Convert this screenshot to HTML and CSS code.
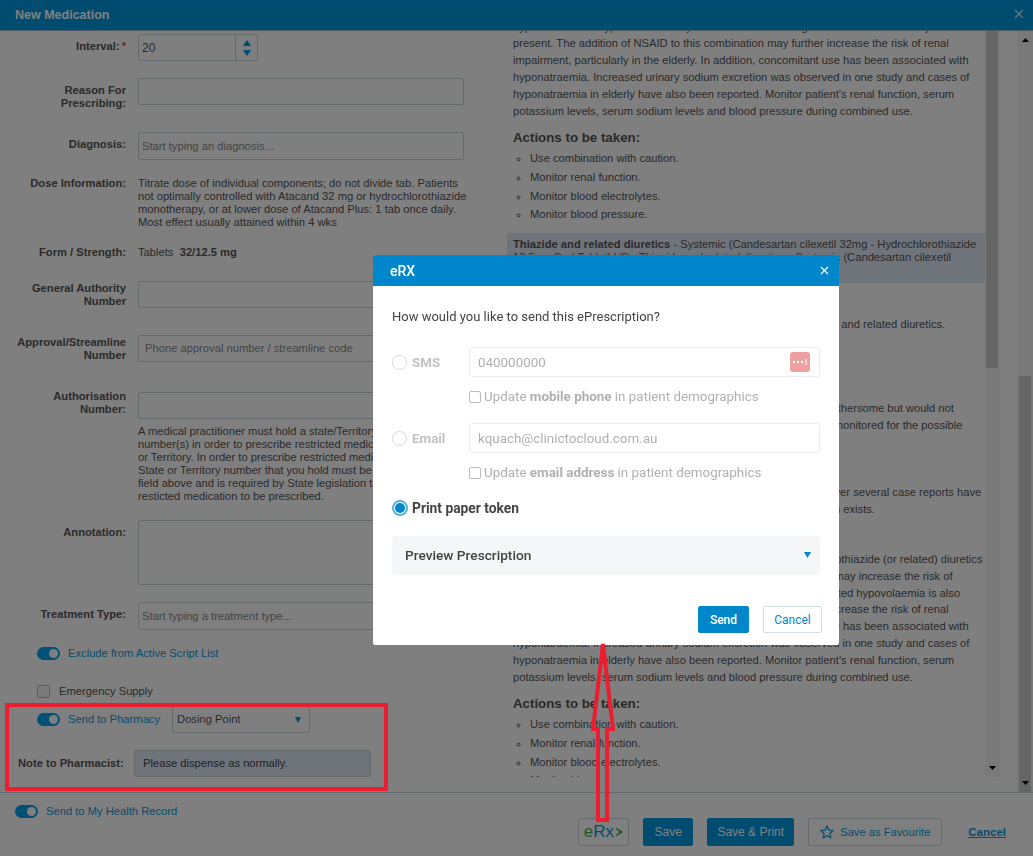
FILE: index.html
```html
<!DOCTYPE html>
<html lang="en">
<head>
<meta charset="utf-8">
<title>New Medication</title>
<link rel="stylesheet" href="styles.css">
</head>
<body>
<div class="app">
  <header class="titlebar">
    <span class="titlebar-title">New Medication</span>
    <svg class="titlebar-close" width="10" height="10" viewBox="0 0 10 10"><path d="M1 1l8 8M9 1l-8 8"/></svg>
  </header>

  <main class="workspace">
    <section class="form-pane">
      <div class="row row-interval">
        <label class="row-label">Interval:<span class="req">*</span></label>
        <div class="spin">
          <span class="spin-value">20</span>
          <span class="spin-buttons">
            <svg width="8" height="6" viewBox="0 0 8 6"><path d="M4 0l4 6H0z"/></svg>
            <svg width="8" height="6" viewBox="0 0 8 6"><path d="M0 0h8L4 6z"/></svg>
          </span>
        </div>
      </div>
      <div class="row row-reason">
        <label class="row-label">Reason For<br>Prescribing:</label>
        <div class="input"></div>
      </div>
      <div class="row row-diagnosis">
        <label class="row-label">Diagnosis:</label>
        <div class="input input-tall placeholder">Start typing an diagnosis...</div>
      </div>
      <div class="row row-dose">
        <label class="row-label">Dose Information:</label>
        <p class="row-text">Titrate dose of individual components; do not divide tab. Patients<br>not optimally controlled with Atacand 32 mg or hydrochlorothiazide<br>monotherapy, or at lower dose of Atacand Plus: 1 tab once daily.<br>Most effect usually attained within 4 wks</p>
      </div>
      <div class="row row-form">
        <label class="row-label">Form / Strength:</label>
        <p class="row-text">Tablets&nbsp; <b>32/12.5 mg</b></p>
      </div>
      <div class="row row-authority">
        <label class="row-label">General Authority<br>Number</label>
        <div class="input"></div>
      </div>
      <div class="row row-approval">
        <label class="row-label">Approval/Streamline<br>Number</label>
        <div class="input placeholder placeholder-inset">Phone approval number / streamline code</div>
      </div>
      <div class="row row-authorisation">
        <label class="row-label">Authorisation<br>Number:</label>
        <div class="stack">
          <div class="input"></div>
          <p class="row-text row-note">A medical practitioner must hold a state/Territory authority<br>number(s) in order to prescribe restricted medication in their State<br>or Territory. In order to prescribe restricted medication the<br>State or Territory number that you hold must be entered in the<br>field above and is required by State legislation to allow the<br>resticted medication to be prescribed.</p>
        </div>
      </div>
      <div class="row row-annotation">
        <label class="row-label">Annotation:</label>
        <div class="input textarea"></div>
      </div>
      <div class="row row-treatment">
        <label class="row-label">Treatment Type:</label>
        <div class="input input-tall placeholder">Start typing a treatment type...</div>
      </div>
      <div class="option option-exclude">
        <span class="toggle"></span><span class="option-link">Exclude from Active Script List</span>
      </div>
      <div class="option option-emergency">
        <span class="check"></span><span class="option-plain">Emergency Supply</span>
      </div>
      <div class="option option-pharmacy">
        <span class="toggle"></span><span class="option-link">Send to Pharmacy</span>
        <div class="select"><span>Dosing Point</span><svg width="6" height="6" viewBox="0 0 6 6"><path d="M0 0h6L3 6z"/></svg></div>
      </div>
      <div class="pharmacist">
        <label class="pharmacist-label">Note to Pharmacist:</label>
        <div class="pharmacist-input">Please dispense as normally.</div>
      </div>
    </section>

    <section class="info-pane">
      <div class="info-scroll">
        <div class="info-content">
          <p class="para para-first">hypotension and hypovolaemia may occur when these drugs are combined and may be<br>present. The addition of NSAID to this combination may further increase the risk of renal<br>impairment, particularly in the elderly. In addition, concomitant use has been associated with<br>hyponatraemia. Increased urinary sodium excretion was observed in one study and cases of<br>hyponatraemia in elderly have also been reported. Monitor patient's renal function, serum<br>potassium levels, serum sodium levels and blood pressure during combined use.</p>
          <h3 class="actions-title">Actions to be taken:</h3>
          <ul class="actions">
            <li>Use combination with caution.</li>
            <li>Monitor renal function.</li>
            <li>Monitor blood electrolytes.</li>
            <li>Monitor blood pressure.</li>
          </ul>
          <div class="interaction"><b>Thiazide and related diuretics</b> - Systemic (Candesartan cilexetil 32mg - Hydrochlorothiazide<br>12.5mg Oral Tablet) VS - Thiazide and related diuretics - Systemic (Candesartan cilexetil<br>32mg - Hydrochlorothiazide 12.5mg Oral Tablet)</div>
          <p class="para para-a">This medication contains two or more agents of the same thiazide and related diuretics.</p>
          <p class="para para-b">Concurrent use may be required in some patients and is rarely bothersome but would not<br>usually be recommended. These patients should be very closely monitored for the possible</p>
          <p class="para para-c">No formal interaction studies have been conducted in man, however several case reports have<br>been published and the potential for a highly significant interaction exists.</p>
          <p class="para para-d">Concurrent use of candesartan and other sartans with hydrochlorothiazide (or related) diuretics<br>is common in the treatment of hypertension, but the combination may increase the risk of<br>hypotension and acute renal impairment, especially if diuretic-related hypovolaemia is also<br>present. The addition of NSAID to this combination may further increase the risk of renal<br>impairment, particularly in the elderly. In addition, concomitant use has been associated with<br>hyponatraemia. Increased urinary sodium excretion was observed in one study and cases of<br>hyponatraemia in elderly have also been reported. Monitor patient's renal function, serum<br>potassium levels, serum sodium levels and blood pressure during combined use.</p>
          <h3 class="actions-title">Actions to be taken:</h3>
          <ul class="actions">
            <li>Use combination with caution.</li>
            <li>Monitor renal function.</li>
            <li>Monitor blood electrolytes.</li>
            <li>Monitor blood pressure.</li>
          </ul>
        </div>
        <div class="scrollbar scrollbar-inner">
          <span class="thumb thumb-inner"></span>
          <svg class="scroll-down" width="7" height="4" viewBox="0 0 7 4"><path d="M0 0h7L3.5 4z"/></svg>
        </div>
      </div>
      <div class="scrollbar scrollbar-outer">
        <svg class="scroll-up" width="7" height="4" viewBox="0 0 7 4"><path d="M3.5 0L7 4H0z"/></svg>
        <span class="thumb thumb-outer"></span>
        <svg class="scroll-down" width="7" height="4" viewBox="0 0 7 4"><path d="M0 0h7L3.5 4z"/></svg>
      </div>
    </section>
  </main>

  <footer class="footer">
    <div class="option option-record">
      <span class="toggle"></span><span class="option-link">Send to My Health Record</span>
    </div>
    <div class="footer-actions">
      <button class="btn btn-erx"><span class="erx-e">e</span><span class="erx-rx">Rx</span><svg width="9" height="10" viewBox="0 0 9 10"><path d="M1.500 1.500L6 5l-4.500 3.500" /><path d="M4.500 3.500L6.500 5l-2 1.500"/></svg></button>
      <button class="btn btn-primary btn-save">Save</button>
      <button class="btn btn-primary btn-print">Save &amp; Print</button>
      <button class="btn btn-favourite"><svg width="14" height="14" viewBox="0 0 14 14"><path d="M7 1.200l1.800 3.900 4.200.5-3.100 2.900.8 4.200L7 10.700l-3.700 2 .8-4.200L1 5.600l4.200-.5z"/></svg>Save as Favourite</button>
      <a class="footer-cancel" href="#">Cancel</a>
    </div>
  </footer>
</div>

<div class="backdrop"></div>

<div class="modal">
  <div class="modal-head">
    <span>eRX</span>
    <svg width="9" height="9" viewBox="0 0 9 9"><path d="M1 1l7 7M8 1L1 8"/></svg>
  </div>
  <div class="modal-body">
    <p class="question">How would you like to send this ePrescription?</p>
    <div class="send-row send-sms">
      <span class="radio"></span><span class="send-label">SMS</span>
      <div class="send-field">
        <div class="send-input"><span>040000000</span>
          <span class="send-dots"><svg width="16" height="6" viewBox="0 0 16 6"><circle cx="2" cy="3" r="1.200"/><circle cx="6" cy="3" r="1.200"/><circle cx="10" cy="3" r="1.200"/><rect x="13.500" y="0" width="1.200" height="6"/></svg></span>
        </div>
        <div class="send-update"><span class="send-check"></span><span>Update <b>mobile phone</b> in patient demographics</span></div>
      </div>
    </div>
    <div class="send-row send-email">
      <span class="radio"></span><span class="send-label">Email</span>
      <div class="send-field">
        <div class="send-input"><span>kquach@clinictocloud.com.au</span></div>
        <div class="send-update"><span class="send-check"></span><span>Update <b>email address</b> in patient demographics</span></div>
      </div>
    </div>
    <div class="send-paper">
      <span class="radio radio-on"></span><span class="paper-label">Print paper token</span>
    </div>
    <div class="preview">
      <span>Preview Prescription</span>
      <svg width="7" height="6" viewBox="0 0 7 6"><path d="M0 0h7L3.500 6z"/></svg>
    </div>
    <div class="modal-actions">
      <button class="modal-btn modal-send">Send</button>
      <button class="modal-btn modal-cancel">Cancel</button>
    </div>
  </div>
</div>

<svg class="markup" width="1033" height="856" viewBox="0 0 1033 856">
  <rect x="7" y="705" width="379" height="84"/>
  <path d="M603 644L613 729H607V820H598V729H593z"/>
</svg>
</body>
</html>
```
FILE: styles.css
```css
* { box-sizing: border-box; }

html, body {
  margin: 0;
  height: 100%;
  overflow: hidden;
}

body {
  font-family: "Liberation Sans", Arial, sans-serif;
  font-size: 11.200px;
  color: #555;
  background: #fff;
}

p, h3, ul { margin: 0; padding: 0; }

.app {
  display: flex;
  flex-direction: column;
  width: 1033px;
  height: 856px;
}

.titlebar {
  flex: none;
  height: 31px;
  padding: 0 9px 0 15px;
  display: flex;
  align-items: center;
  justify-content: space-between;
  background: #0096e0;
  border-bottom: 1px solid #8fb8cf;
  color: #fff;
}

.titlebar-title { font-size: 12.500px; font-weight: bold; color: #fff; }
.titlebar-close { margin-bottom: 2px; }
.titlebar-close path { stroke: #d5e8f3; stroke-width: 1.300; fill: none; }

.workspace {
  flex: none;
  height: 761px;
  display: flex;
  overflow: hidden;
}

.form-pane {
  flex: none;
  width: 507px;
  padding-top: 3px;
}

.row {
  display: grid;
  grid-template-columns: 126px 326px;
  column-gap: 12px;
  line-height: 13px;
}

.row-label {
  text-align: right;
  font-weight: bold;
  color: #555;
}

.req { color: #f04040; margin-left: 2px; }

.row-interval { height: 44px; }
.row-interval .row-label { padding-top: 6px; }
.row-reason { height: 54px; }
.row-reason .row-label { padding-top: 6px; }
.row-diagnosis { height: 45px; }
.row-diagnosis .row-label { padding-top: 6px; }
.row-dose { height: 69px; }
.row-form { height: 35px; }
.row-authority { height: 54px; }
.row-authority .row-label { padding-top: 1px; }
.row-approval { height: 54px; }
.row-approval .row-label { padding-top: 1px; }
.row-authorisation { height: 131px; }
.row-authorisation .row-label { padding-top: 1px; }
.row-authorisation .input { margin-top: 3px; }
.row-annotation { height: 82px; }
.row-annotation .row-label { padding-top: 6px; }
.row-treatment { height: 40px; }
.row-treatment .row-label { padding-top: 6px; }

.row-text { color: #555; white-space: nowrap; }
.row-note { margin-top: 6px; }

.input {
  height: 27px;
  border: 1px solid #c6d4dd;
  border-radius: 2px;
  background: #fff;
}

.input-tall { height: 28px; }
.textarea { height: 65px; }

.placeholder {
  display: flex;
  align-items: center;
  padding-left: 3px;
  color: #888;
}

.placeholder-inset { padding-left: 6px; }

.spin {
  width: 120px;
  height: 27px;
  display: flex;
  border: 1px solid #c6d4dd;
  border-radius: 2px;
}

.spin-value { flex: 1; padding: 7px 3px 0; color: #555; font-size: 12px; }

.spin-buttons {
  width: 22px;
  display: flex;
  flex-direction: column;
  align-items: center;
  justify-content: center;
  gap: 4px;
  border-left: 1px solid #c6d4dd;
}

.spin-buttons path { fill: #0096e0; }

.option {
  display: flex;
  align-items: center;
  padding-left: 37px;
  line-height: 13px;
}

.option-exclude { height: 22px; }
.option-emergency { height: 22px; margin-top: 16px; }
.option-pharmacy { height: 27px; margin-top: 4px; }
.option-record { padding-left: 15px; }

.toggle {
  flex: none;
  position: relative;
  width: 23px;
  height: 13px;
  border-radius: 7px;
  background: #00a0f0;
}

.toggle::after {
  content: "";
  position: absolute;
  top: 2px;
  right: 2px;
  width: 9px;
  height: 9px;
  border-radius: 50%;
  background: #fff;
}

.option-link { margin-left: 8px; color: #0a9ad8; }
.option-plain { margin-left: 9px; color: #555; }

.check {
  flex: none;
  width: 13px;
  height: 13px;
  border: 1px solid #bbb;
  border-radius: 2px;
  background: #f4f4f4;
}

.select {
  width: 138px;
  height: 27px;
  margin-left: 12px;
  padding: 0 8px 0 4px;
  display: flex;
  align-items: center;
  justify-content: space-between;
  border: 1px solid #c6d4dd;
  border-radius: 2px;
  color: #555;
}

.select path { fill: #0096e0; }

.pharmacist {
  display: flex;
  align-items: center;
  margin-top: 17px;
  padding-left: 18px;
}

.pharmacist-label { width: 116px; padding-bottom: 2px; font-weight: bold; color: #555; }

.pharmacist-input {
  width: 237px;
  height: 27px;
  padding: 0 0 1px 8px;
  display: flex;
  align-items: center;
  border: 1px solid #c6d4dd;
  border-radius: 2px;
  background: #dfe8f6;
  color: #444;
}

.info-pane {
  flex: 1;
  display: flex;
  min-width: 0;
}

.info-scroll {
  flex: none;
  width: 493px;
  height: 746px;
  display: flex;
  overflow: hidden;
}

.info-content {
  width: 478px;
  flex: none;
  line-height: 16.800px;
  color: #555;
}

.para { padding-left: 6px; white-space: nowrap; }
.para-first { margin-top: -12.400px; }
.para-a { margin-top: 32.600px; }
.para-b { margin-top: 68px; }
.para-c { margin-top: 50.200px; }
.para-d { margin-top: 33.200px; }

.actions-title {
  margin-top: 11px;
  padding-left: 6px;
  font-size: 13.300px;
  line-height: 16px;
  font-weight: bold;
  color: #555;
}

.actions {
  margin-top: 3px;
  padding-left: 23px;
  list-style: circle;
  line-height: 18.670px;
}

.interaction {
  height: 50px;
  margin-top: 9px;
  padding: 5px 0 0 6px;
  line-height: 13px;
  background: #dfe8f6;
  color: #555;
  overflow: hidden;
  white-space: nowrap;
}

.scrollbar {
  flex: none;
  position: relative;
  background: #f2f2f2;
}

.scrollbar-inner { width: 15px; }
.scrollbar-outer { width: 16px; height: 761px; margin-left: 17px; }

.thumb {
  position: absolute;
  left: 2px;
  width: 12px;
  background: #cdcdcd;
}

.thumb-inner { top: 0; height: 337px; left: 1px; }
.thumb-outer { top: 345px; bottom: 0; }

.scroll-up, .scroll-down { position: absolute; left: 5px; }
.scroll-up { top: 7px; }
.scroll-down { bottom: 7px; }
.scrollbar-inner .scroll-down { left: 4px; }

.footer {
  flex: none;
  height: 64px;
  display: flex;
  justify-content: space-between;
  border-top: 1px solid #c6d4dd;
}

.option-record { height: 13px; margin-top: 12px; }

.footer-actions {
  display: flex;
  align-items: center;
  gap: 14px;
  margin-top: 25px;
  height: 28px;
  padding-right: 27px;
}

.btn {
  height: 28px;
  padding: 0;
  font: inherit;
  border-radius: 2px;
  border: 1px solid #c6d4dd;
  background: #fff;
}

.btn-erx {
  width: 51px;
  display: flex;
  align-items: center;
  justify-content: center;
  font-size: 17px;
}

.erx-e { color: #4bb24a; }
.erx-rx { color: #0a9ad8; }
.btn-erx svg { margin-left: 1px; }
.btn-erx path { fill: none; stroke: #4bb24a; stroke-width: 1.600; }

.btn-primary {
  background: #0096e0;
  border-color: #0096e0;
  color: #fff;
  font-size: 12px;
}

.btn-save { width: 50px; }
.btn-print { width: 87px; }

.btn-favourite {
  width: 134px;
  display: flex;
  align-items: center;
  justify-content: center;
  gap: 6px;
  color: #0a9ad8;
}

.btn-favourite path { fill: none; stroke: #0a9ad8; stroke-width: 1.200; }

.footer-cancel {
  margin-left: 12px;
  color: #0a9ad8;
  font-size: 11.500px;
  font-weight: bold;
}

.backdrop {
  position: fixed;
  inset: 0;
  background: rgba(0, 0, 0, .5);
}

.modal {
  position: fixed;
  left: 373px;
  top: 255px;
  width: 466px;
  height: 390px;
  background: #fff;
  border-radius: 2px;
  overflow: hidden;
  font-family: Roboto, "Liberation Sans", sans-serif;
  font-size: 13px;
  color: #444;
}

.modal-head {
  height: 31px;
  padding: 0 10px 0 17px;
  display: flex;
  align-items: center;
  justify-content: space-between;
  background: #0086ca;
  color: #fff;
  font-size: 14px;
  font-weight: 500;
}

.modal-head path { stroke: #fff; stroke-width: 1.200; fill: none; }

.modal-body { padding: 0 19px; }

.question { margin-top: 23px; line-height: 16px; }

.send-row { display: flex; align-items: flex-start; }
.send-sms { margin-top: 22px; }
.send-email { margin-top: 19px; }

.radio {
  flex: none;
  width: 15px;
  height: 15px;
  margin-top: 8px;
  border: 1.500px solid #d8d8d8;
  border-radius: 50%;
  background: #fff;
}

.radio-on {
  width: 16px;
  height: 16px;
  margin-top: 0;
  border: 2px solid #56b0e0;
  position: relative;
}

.radio-on::after {
  content: "";
  position: absolute;
  inset: 1px;
  border-radius: 50%;
  background: #0086ca;
}

.send-label {
  width: 62px;
  padding: 8px 0 0 5px;
  line-height: 15px;
  font-size: 13.400px;
  font-weight: bold;
  color: #c2c2c2;
}

.send-field { width: 351px; font-size: 13.400px; }

.send-input {
  height: 30px;
  padding: 0 9px 0 8px;
  display: flex;
  align-items: center;
  justify-content: space-between;
  border: 1px solid #e6ecf1;
  border-radius: 3px;
  color: #b0b0b0;
}

.send-dots {
  width: 20px;
  height: 20px;
  display: flex;
  align-items: center;
  justify-content: center;
  border-radius: 3px;
  background: #ee9f9f;
}

.send-dots svg { fill: #fff; }

.send-update {
  display: flex;
  align-items: center;
  margin-top: 12px;
  gap: 3px;
  line-height: 15px;
  color: #b0b0b0;
}

.send-check {
  flex: none;
  width: 12px;
  height: 12px;
  border: 1px solid #bcbcbc;
  border-radius: 2px;
}

.send-paper {
  display: flex;
  align-items: center;
  margin-top: 20px;
}

.paper-label { margin-left: 4px; font-size: 13.800px; font-weight: bold; color: #444; }

.preview {
  height: 39px;
  margin-top: 20px;
  padding: 0 9px 2px 13px;
  display: flex;
  align-items: center;
  justify-content: space-between;
  background: #f5f6f8;
  border-radius: 4px;
  font-size: 13.700px;
  font-weight: 500;
}

.preview path { fill: #0086ca; }

.modal-actions {
  display: flex;
  justify-content: flex-end;
  gap: 14px;
  margin: 31px -2px 0 0;
}

.modal-btn {
  height: 27px;
  padding: 0;
  font-family: inherit;
  font-size: 12px;
  border-radius: 2px;
}

.modal-send {
  width: 51px;
  border: 1px solid #0086ca;
  background: #0086ca;
  color: #fff;
  font-weight: 500;
}

.modal-cancel {
  width: 59px;
  border: 1px solid #cfdde6;
  background: #fff;
  color: #0086ca;
}

.markup {
  position: fixed;
  left: 0;
  top: 0;
  pointer-events: none;
}

.markup rect, .markup path {
  fill: none;
  stroke: #ed1c2e;
  stroke-width: 4;
}
```
